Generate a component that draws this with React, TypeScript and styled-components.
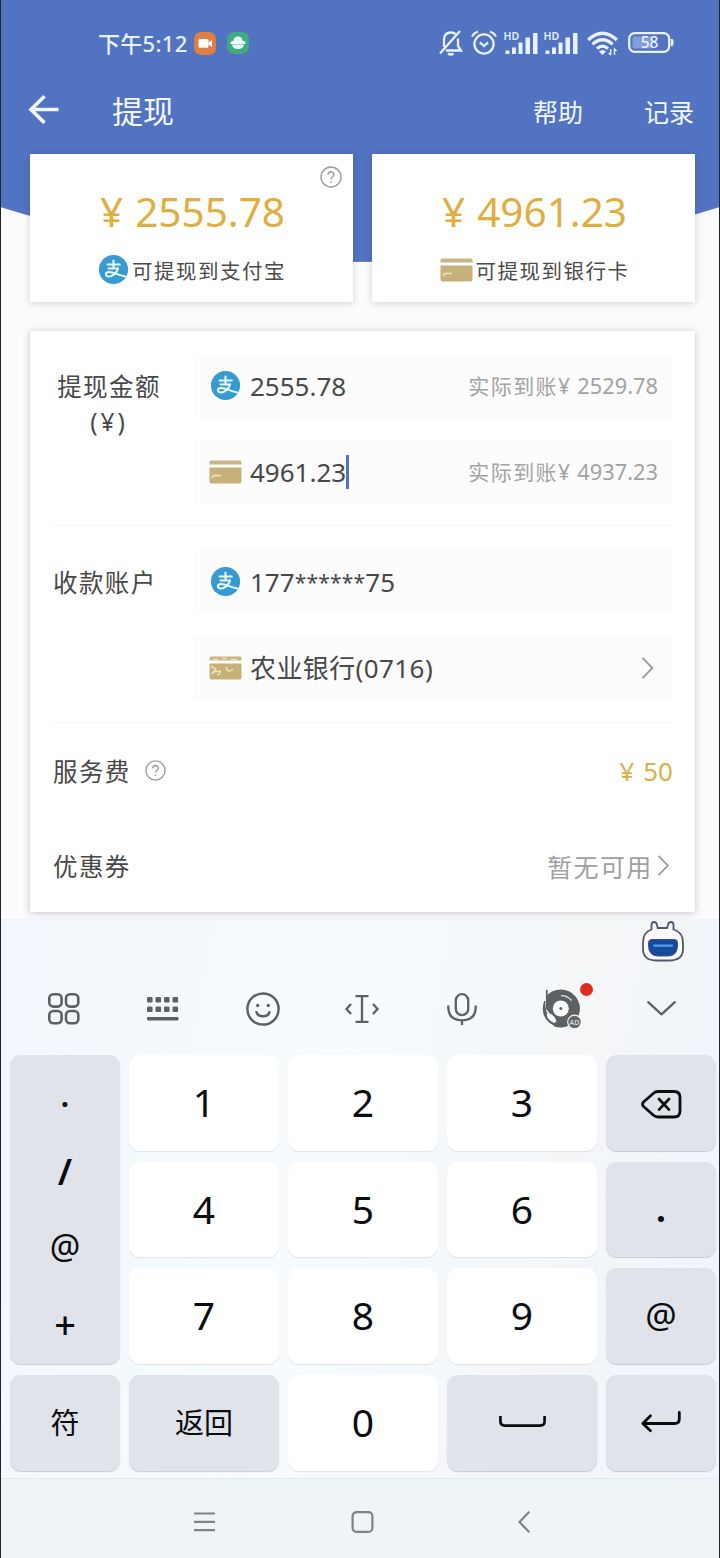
import React from 'react';
import styled, { createGlobalStyle } from 'styled-components';

const latin = '"Noto Sans", "Noto Sans CJK SC", sans-serif';

const GlobalStyle = createGlobalStyle`
  *, *::before, *::after { box-sizing: border-box; }
  body { margin: 0; font-family: ${latin}; }
  svg { display: block; flex: none; overflow: visible; }
`;

const Screen = styled.main`
  width: 720px;
  height: 1558px;
  overflow: hidden;
  display: flex;
  flex-direction: column;
  border: solid #22242e;
  border-width: 0 1px;
  background: radial-gradient(circle 1206px at 359px -944px, #5173c2 1205.4px, #fbfbfd 1206.4px);
`;

/* ---------- header ---------- */

const StatusBar = styled.header`
  height: 86px;
  padding: 0 45px 0 97px;
  display: flex;
  align-items: center;
  justify-content: space-between;
  color: #e8f1ff;
`;

const StatusGroup = styled.div<{ $gap: number }>`
  display: flex;
  align-items: center;
  gap: ${(p) => p.$gap}px;
`;

const Clock = styled.span`
  font-size: 22px;
  font-weight: 500;
  line-height: 30px;
  letter-spacing: 0.3px;
  margin-right: -5px;
`;

const AppBar = styled.nav`
  height: 50px;
  margin-bottom: 18px;
  padding: 0 25px 0 28px;
  display: flex;
  align-items: center;
  color: #f3f8ff;
`;

const Title = styled.h1`
  margin: 0 auto 0 52px;
  font-size: 31px;
  font-weight: 400;
  line-height: 40px;
`;

const NavAction = styled.span`
  margin-left: 61px;
  font-size: 25px;
  line-height: 36px;
  padding-top: 1px;
`;

/* ---------- balance cards ---------- */

const Balances = styled.section`
  padding: 0 24px 0 29px;
  margin-bottom: 29px;
  display: grid;
  grid-template-columns: 1fr 1fr;
  gap: 19px;
`;

const BalanceCard = styled.article`
  position: relative;
  height: 148px;
  padding-top: 30px;
  display: flex;
  flex-direction: column;
  align-items: center;
  background: #fff;
  box-shadow: 0 1px 7px rgba(40, 40, 50, 0.2);
`;

const Balance = styled.div`
  padding-left: 2px;
  display: flex;
  gap: 12px;
  color: #dfae40;
  font-size: 40.5px;
  line-height: 56px;
`;

const BalanceTarget = styled.div`
  margin-top: 15px;
  padding-left: 2px;
  display: flex;
  align-items: center;
  gap: 3px;
  height: 30px;
  color: #4b4b4b;
  font-size: 20.5px;
  letter-spacing: 1.5px;
`;

const CornerHelp = styled.span`
  position: absolute;
  top: 12px;
  right: 11px;
`;

/* ---------- form ---------- */

const Form = styled.section`
  height: 581px;
  margin: 0 24px 7px 29px;
  padding: 0 22px 0 23px;
  background: #fff;
  box-shadow: 0 1px 7px rgba(40, 40, 50, 0.26);
`;

const FieldGroup = styled.div<{ $height: number; $top: number }>`
  height: ${(p) => p.$height}px;
  padding-top: ${(p) => p.$top}px;
  display: grid;
  grid-template-columns: 140px 1fr;
  border-bottom: 1px solid #f8f8f8;
`;

const FieldLabel = styled.div<{ $center?: boolean }>`
  width: 112px;
  padding-top: 15px;
  color: #484848;
  font-size: 24.5px;
  line-height: 35px;
  letter-spacing: 1.4px;
  text-align: ${(p) => (p.$center ? 'center' : 'left')};
`;

const Unit = styled.span`
  letter-spacing: 3px;
`;

const Fields = styled.div`
  display: flex;
  flex-direction: column;
  gap: 22px;
`;

const Field = styled.div`
  height: 64px;
  padding: 0 15px 0 16px;
  display: flex;
  align-items: center;
  background: #fcfcfc;
`;

const IconSlot = styled.span`
  width: 33px;
  margin-right: 8px;
  display: flex;
  justify-content: center;
`;

const Value = styled.span<{ $spacing?: number }>`
  color: #484848;
  font-size: 26px;
  line-height: 36px;
  letter-spacing: ${(p) => p.$spacing ?? 0}px;
  white-space: nowrap;
`;

const Mask = styled.span`
  font-size: 21px;
  letter-spacing: 0.2px;
  line-height: 1;
  vertical-align: 2px;
`;

const Caret = styled.i`
  width: 3px;
  height: 34px;
  background: #5575c0;
`;

const Received = styled.span`
  margin-left: auto;
  display: flex;
  gap: 6px;
  color: #a3a3a3;
  font-size: 21.8px;
  line-height: 30px;
  white-space: nowrap;
`;

const ReceivedLabel = styled.span`
  font-size: 21px;
  letter-spacing: 1.4px;
`;

const End = styled.span<{ $pad: number }>`
  margin-left: auto;
  padding-right: ${(p) => p.$pad}px;
`;

const SummaryRow = styled.div`
  height: 95px;
  display: flex;
  align-items: center;
  gap: 14px;
  color: #484848;
  font-size: 24.5px;
  letter-spacing: 1.4px;
`;

const Fee = styled.span`
  margin-left: auto;
  display: flex;
  gap: 9px;
  color: #dcb046;
  font-size: 26px;
  letter-spacing: 0;
`;

const Coupon = styled.span`
  margin-left: auto;
  padding-right: 5px;
  display: flex;
  align-items: center;
  gap: 5px;
  color: #a0a0a0;
  font-size: 25px;
  letter-spacing: 1.3px;
`;

/* ---------- keyboard ---------- */

const Keyboard = styled.section`
  height: 559px;
  flex: none;
  display: flex;
  flex-direction: column;
  background: linear-gradient(100deg, #f1f7fc 0%, #f7fbfd 45%, #f4f6f8 75%, #f0f5fb 100%);
  border-top: 1px solid #f0f2f4;
`;

const Assistant = styled.div`
  height: 42px;
  padding: 1px 35px 0 0;
  display: flex;
  justify-content: flex-end;
`;

const Tools = styled.div`
  height: 93px;
  padding: 0 8px 0 13px;
  display: grid;
  grid-template-columns: repeat(7, 1fr);
  place-items: center;
  color: #5d6164;
`;

const Tool = styled.span`
  position: relative;
`;

const Dot = styled.i`
  position: absolute;
  top: -6px;
  right: -12px;
  width: 13px;
  height: 13px;
  border-radius: 50%;
  background: #e02b20;
`;

const Keys = styled.div`
  padding: 0 3px 0 9px;
  display: grid;
  grid-template-columns: 110px repeat(3, 150px) 110px;
  grid-template-rows: repeat(4, 95.7px);
  gap: 11px 9px;
`;

const Key = styled.div<{ $tone?: 'soft'; $drop?: number }>`
  display: flex;
  align-items: center;
  justify-content: center;
  border-radius: 11px;
  color: #0b0c0e;
  background: ${(p) => (p.$tone ? '#e0e4ea' : '#fff')};
  box-shadow: 0 1px 1px rgba(80, 90, 105, ${(p) => (p.$tone ? 0.28 : 0.14)});
  font-size: ${(p) => (p.$tone ? 29 : 39)}px;
  padding-top: ${(p) => p.$drop ?? 0}px;
  padding-bottom: ${(p) => (p.$drop ? 0 : 3)}px;
`;

const SymbolColumn = styled(Key)`
  grid-row: span 3;
  flex-direction: column;
  justify-content: flex-start;
`;

const SymbolCell = styled.span<{ $size: number; $lift?: number; $weight?: number }>`
  height: 76px;
  padding-bottom: ${(p) => p.$lift ?? 0}px;
  display: flex;
  align-items: center;
  font-size: ${(p) => p.$size}px;
  font-weight: ${(p) => p.$weight ?? 400};
  line-height: 1;
`;

const Sign = styled.span<{ $weight: number }>`
  font-size: 35px;
  font-weight: ${(p) => p.$weight};
  line-height: 40px;
  padding-bottom: 5px;
`;

const SystemNav = styled.footer`
  height: 80px;
  padding: 7px 182px 0 193px;
  flex: none;
  display: flex;
  align-items: center;
  justify-content: space-between;
  background: #eff4f7;
  border-top: 1px solid #e5e9eb;
`;

/* ---------- drawings ---------- */

const Alipay = () => (
  <svg width="30" height="30" viewBox="0.5 0.5 30 30" fill="none">
    <circle cx="15" cy="15" r="14.6" fill="#379bd2" />
    <g stroke="#e9fbff" strokeWidth="2" strokeLinecap="round">
      <path d="M9 10H21.3M15 6V14M10 14H19.6" />
      <path d="M19.6 14C18.3 18 14.5 22 10.3 22C6.2 22 6.6 17.6 10.6 17.6C15 17.6 20 20.6 26.8 22" />
    </g>
  </svg>
);

const BankCard = ({ worn }: { worn?: boolean }) => (
  <svg width="33" height="24" viewBox="0 0 33 24" fill="none">
    <path d="M2 0.5H31Q32.5 0.5 32.5 2V4.6H0.5V2Q0.5 0.5 2 0.5Z" fill="#c9b584" />
    <path d="M0.5 7.4H32.5V21.5Q32.5 23.5 30.5 23.5H2.5Q0.5 23.5 0.5 21.5Z" fill="#c7b07a" />
    <path d="M3 18L5 15.6H12" stroke="#efe5c4" strokeWidth="1.5" />
    {worn && (
      <path
        d="M4 3.5H9M13 2.5H18M22 3.5H28M2 10.5L7 13L4 17M8 19Q12 19 11 14M17 11Q19 18 24 13"
        stroke="#efe3b4"
        strokeWidth="1.4"
      />
    )}
  </svg>
);

const Help = ({ size }: { size: number }) => (
  <svg width={size} height={size} viewBox="0 0 22 22" fill="none" stroke="#9b9b9b" strokeWidth="1.4">
    <circle cx="11" cy="11" r="10" />
    <path d="M8 8.7C8 4.8 14 4.9 14 8.5C14 10.7 11 10.7 11 13.4" />
    <path d="M11 15.2V16.8" />
  </svg>
);

const Chevron = ({ h }: { h: number }) => (
  <svg width={h / 2} height={h} viewBox="0 0 11 22" fill="none" stroke="#9c9c9c" strokeWidth="1.9">
    <path d="M0.6 0.8L10.3 11L0.6 21.2" />
  </svg>
);

const BackArrow = () => (
  <svg width="31" height="30" viewBox="1 0.5 31 30" fill="none" stroke="#f3f8ff" strokeWidth="3.6">
    <path d="M30.5 14H3M16.5 0.8L3 14L16.5 27.4" />
  </svg>
);

const RecorderBadge = () => (
  <svg width="22" height="23" viewBox="0 0 22 23">
    <rect width="22" height="23" rx="7" fill="#df7f42" />
    <rect x="4.5" y="7" width="10" height="8.8" rx="1.6" fill="#fff" />
    <path d="M14.5 10.5L18 8V15L14.5 12.5Z" fill="#fff" />
  </svg>
);

const CloudBadge = () => (
  <svg width="22" height="22" viewBox="0 0 22 22">
    <rect width="22" height="22" rx="7" fill="#41a983" />
    <path d="M6.5 8.7Q7 4.5 11 4.5Q15 4.5 15.5 8.7Q19 9 18.5 12H3.5Q3 9 6.500 8.7Z" fill="#eafff8" />
    <path d="M5 12.400H17Q16 17 11 17Q6 17 5 12.400Z" fill="#eafff8" />
  </svg>
);

const Muted = () => (
  <svg width="24" height="26" viewBox="0 0 24 26" fill="none" stroke="currentColor" strokeWidth="2.3">
    <path d="M5 17V10Q5 2.5 12 2.5Q14.5 2.5 16.5 4M19 8.5V16L22 20.5H7M9 23.5Q12 25.5 14.5 23.5M1 23.5L21 1" />
  </svg>
);

const Alarm = () => (
  <svg width="26" height="26" viewBox="0 0 26 26" fill="none" stroke="currentColor" strokeWidth="2.3">
    <circle cx="13" cy="14" r="9.6" />
    <path d="M1 6.5Q3 3 7 1.5M25 6.5Q23 3 19 1.5M8.8 12.3L13 16L17 12.3" />
  </svg>
);

const Signal = () => (
  <svg width="32" height="24" viewBox="1 0 32 24" fill="currentColor">
    <text x="-0.5" y="8.5" fontSize="10.5" fontWeight="600" fontFamily="Noto Sans">HD</text>
    <path d="M1.5 19.5H5.5V23H1.5ZM8 16.5H12V23H8ZM14.5 11.5H18.5V23H14.5ZM21.5 6.5H26V23H21.5ZM29 2H33.5V23H29Z" />
  </svg>
);

const Wifi = () => (
  <svg width="35" height="24" viewBox="-2 0 35 24" fill="none" stroke="currentColor" strokeWidth="3.2">
    <path d="M1.2 9Q15.5 -4.600 29.800 9M5.500 13.400Q15.500 4.200 25.500 13.400M10 17.700Q15.500 12.600 21 17.700" />
    <path d="M12 20.5Q15.5 17.5 19 20.5L15.5 24Z" fill="currentColor" stroke="none" />
    <path d="M23.7 18V24M21.7 22L23.7 24M27.5 24V18L29.5 20" strokeWidth="1.3" />
  </svg>
);

const Battery = () => (
  <svg width="46" height="22" viewBox="0 0 46 22" fill="none">
    <rect x="1.2" y="1.2" width="40" height="18.6" rx="5.500" stroke="currentColor" strokeWidth="2.3" />
    <rect x="4.5" y="4.5" width="20" height="12" rx="2" fill="#b4c8f0" opacity="0.5" />
    <path d="M43 7H44.2Q45.5 7 45.5 10.500Q45.5 14 44.2 14H43Z" fill="currentColor" />
    <text x="21.5" y="16" fontSize="15.5" fontWeight="500" fontFamily="Noto Sans" textAnchor="middle" fill="currentColor">58</text>
  </svg>
);

const Mascot = () => (
  <svg width="42" height="41" viewBox="0 0 42 41" fill="none">
    <path
      d="M9.5 8.5V4Q9.5 1 12 1Q14.5 1 15 4L15.7 7H25L26 4Q26.5 1 29 1Q31.5 1 31.5 4V8.5Q41 11 41 22V28Q41 39.5 27 39.5H15Q1 39.5 1 28V22Q1 11 9.5 8.5Z"
      fill="#fbfaff"
      stroke="#52556b"
      strokeWidth="1.8"
    />
    <path d="M10 18.5H32Q35.5 18.5 35.5 21.5V24Q35.500 35 26 35H16Q6.5 35 6.5 24V21.5Q6.5 18.5 10 18.5Z" fill="#184a9b" stroke="#3b4d91" />
    <path d="M12 24.6H30" stroke="#4d9df0" strokeWidth="2.2" strokeLinecap="round" />
  </svg>
);

const GridIcon = () => (
  <svg width="32" height="32" viewBox="0 0 32 32" fill="none" stroke="currentColor" strokeWidth="2.6">
    <rect x="1.3" y="1.3" width="12.3" height="12.3" rx="4" />
    <rect x="18" y="1.3" width="12.3" height="12.3" rx="4" />
    <rect x="1.3" y="18" width="12.3" height="12.3" rx="4" />
    <rect x="18" y="18" width="12.3" height="12.3" rx="4" />
  </svg>
);

const KeyboardIcon = () => (
  <svg width="32" height="24" viewBox="0 0 32 24" fill="currentColor">
    {[0, 8.5, 17, 25.5].map((x) => (
      <React.Fragment key={x}>
        <rect x={x} y="0" width="5.6" height="5.6" rx="1.3" />
        <rect x={x} y="9.5" width="5.6" height="5.6" rx="1.3" />
      </React.Fragment>
    ))}
    <rect y="20" width="31.5" height="3.4" rx="1" />
  </svg>
);

const Smile = () => (
  <svg width="34" height="34" viewBox="0 0 34 34" fill="none" stroke="currentColor" strokeWidth="2.5" strokeLinecap="round">
    <circle cx="17" cy="17" r="15.6" />
    <path d="M10.5 20.2Q12 24.3 17 24.3Q22 24.3 23.5 20.2" />
    <circle cx="11.7" cy="13.5" r="1.7" fill="currentColor" stroke="none" />
    <circle cx="22.3" cy="13.5" r="1.7" fill="currentColor" stroke="none" />
  </svg>
);

const CursorIcon = () => (
  <svg width="34" height="28" viewBox="0 0 34 28" fill="none" stroke="currentColor" strokeWidth="2.3">
    <path d="M10.5 1.2H23.5M17 1.2V26.8M10.5 26.8H23.5M6 9L1.5 14L6 19M28 9L32.5 14L28 19" />
  </svg>
);

const Mic = () => (
  <svg width="30" height="32" viewBox="0 0 30 32" fill="none" stroke="currentColor" strokeWidth="2.3">
    <rect x="8.8" y="1.2" width="12.4" height="21" rx="6.2" />
    <path d="M1.3 12.5V14Q1.3 27.3 15 27.3Q28.7 27.3 28.7 14V12.5M15 27.3V32" />
  </svg>
);

const Record = () => (
  <svg width="39" height="40" viewBox="0.5 0 39 40" fill="none">
    <path d="M5 7Q10 0.5 19.3 0.5A19 19 0 1 1 12 37L13 32L5 20Z" fill="currentColor" />
    <path d="M5.3 1V20.5" stroke="currentColor" strokeWidth="1.8" />
    <path d="M2.6 12Q-1.500 25 7 33Q12 37.500 19 38L20 33L12 33Q2.500 24 4 12Z" fill="currentColor" />
    <ellipse cx="10" cy="29" rx="6" ry="2.8" transform="rotate(45 10 29)" fill="#f7fafd" />
    <circle cx="19.3" cy="19.5" r="8" fill="#fbfdfe" />
    <circle cx="19.3" cy="19.5" r="1.5" fill="currentColor" />
    <path d="M19.5 6.6Q26 6.5 30 11.5" stroke="#e4e7e9" strokeWidth="1.4" />
    <circle cx="33" cy="33" r="6.8" fill="#62666a" stroke="#f7fafd" strokeWidth="1.2" />
    <text x="33" y="35.6" fontSize="7" fontWeight="600" fontFamily="Noto Sans" textAnchor="middle" fill="#d6dadd">AD</text>
  </svg>
);

const Collapse = () => (
  <svg width="29" height="15" viewBox="0 0 29 15" fill="none" stroke="currentColor" strokeWidth="2.3" strokeLinecap="round" strokeLinejoin="round">
    <path d="M1.2 1.2L14.5 13.3L27.8 1.2" />
  </svg>
);

const Backspace = () => (
  <svg width="41" height="29" viewBox="0 0 41 29" fill="none" stroke="currentColor" strokeWidth="2.8" strokeLinejoin="round" strokeLinecap="round">
    <path d="M17 1.5H33Q39 1.5 39 7.5V21Q39 27 33 27H17Q14.5 27 12.5 25.3L2.5 16.5Q0.5 14.3 2.5 12L12.5 3.2Q14.5 1.5 17 1.5Z" />
    <path d="M18 9L28 19.6M28 9L18 19.6" />
  </svg>
);

const Space = () => (
  <svg width="47" height="11" viewBox="0 0 47 11" fill="none" stroke="currentColor" strokeWidth="2.7">
    <path d="M1.4 0V5Q1.4 9.6 6 9.6H41Q45.6 9.6 45.6 5V0" />
  </svg>
);

const Enter = () => (
  <svg width="40" height="21" viewBox="0 0 40 21" fill="none" stroke="currentColor" strokeWidth="2.8" strokeLinecap="round" strokeLinejoin="round">
    <path d="M38.3 1.4V8Q38.3 12.5 33.5 12.5H2M9.5 4.8L1.8 12.5L9.5 19.8" />
  </svg>
);

const MenuIcon = () => (
  <svg width="21" height="20" viewBox="0 0 21 20" stroke="#7f8386" strokeWidth="2.2">
    <path d="M0 1.5H21M0 9.8H21M0 18.2H21" />
  </svg>
);

const HomeIcon = () => (
  <svg width="22" height="22" viewBox="0.5 0 22 22" fill="none" stroke="#7f8386" strokeWidth="2.2">
    <rect x="1.1" y="1.1" width="19.8" height="19.8" rx="4" />
  </svg>
);

const BackIcon = () => (
  <svg width="26" height="22" viewBox="-7 0 26 22" fill="none" stroke="#7f8386" strokeWidth="2.2">
    <path d="M11.3 0.8L1.5 11L11.3 21.2" />
  </svg>
);

/* ---------- screen ---------- */

export default function App() {
  return (
    <Screen>
      <GlobalStyle />
      <StatusBar>
        <StatusGroup $gap={11}>
          <Clock>下午5:12</Clock>
          <RecorderBadge />
          <CloudBadge />
        </StatusGroup>
        <StatusGroup $gap={8}>
          <Muted />
          <Alarm />
          <Signal />
          <Signal />
          <Wifi />
          <Battery />
        </StatusGroup>
      </StatusBar>

      <AppBar>
        <BackArrow />
        <Title>提现</Title>
        <NavAction>帮助</NavAction>
        <NavAction>记录</NavAction>
      </AppBar>

      <Balances>
        <BalanceCard>
          <CornerHelp><Help size={22} /></CornerHelp>
          <Balance><span>¥</span><span>2555.78</span></Balance>
          <BalanceTarget><Alipay />可提现到支付宝</BalanceTarget>
        </BalanceCard>
        <BalanceCard>
          <Balance><span>¥</span><span>4961.23</span></Balance>
          <BalanceTarget><BankCard />可提现到银行卡</BalanceTarget>
        </BalanceCard>
      </Balances>

      <Form>
        <FieldGroup $height={195} $top={23}>
          <FieldLabel $center>提现金额<br /><Unit>(¥)</Unit></FieldLabel>
          <Fields>
            <Field>
              <IconSlot><Alipay /></IconSlot>
              <Value>2555.78</Value>
              <Received><ReceivedLabel>实际到账¥</ReceivedLabel>2529.78</Received>
            </Field>
            <Field>
              <IconSlot><BankCard /></IconSlot>
              <Value>4961.23</Value>
              <Caret />
              <Received><ReceivedLabel>实际到账¥</ReceivedLabel>4937.23</Received>
            </Field>
          </Fields>
        </FieldGroup>
        <FieldGroup $height={197} $top={24}>
          <FieldLabel>收款账户</FieldLabel>
          <Fields>
            <Field>
              <IconSlot><Alipay /></IconSlot>
              <Value>177<Mask>******</Mask>75</Value>
            </Field>
            <Field>
              <IconSlot><BankCard worn /></IconSlot>
              <Value $spacing={0.4}>农业银行(0716)</Value>
              <End $pad={5}><Chevron h={22} /></End>
            </Field>
          </Fields>
        </FieldGroup>
        <SummaryRow>
          服务费
          <Help size={21} />
          <Fee><span>¥</span>50</Fee>
        </SummaryRow>
        <SummaryRow>
          优惠券
          <Coupon>暂无可用<Chevron h={21} /></Coupon>
        </SummaryRow>
      </Form>

      <Keyboard>
        <Assistant><Mascot /></Assistant>
        <Tools>
          <GridIcon />
          <KeyboardIcon />
          <Smile />
          <CursorIcon />
          <Mic />
          <Tool><Record /><Dot /></Tool>
          <Collapse />
        </Tools>
        <Keys>
          <SymbolColumn $tone="soft" $drop={12}>
            <SymbolCell $size={32} $weight={600}>·</SymbolCell>
            <SymbolCell $size={36} $lift={13} $weight={600}>/</SymbolCell>
            <SymbolCell $size={34} $lift={13}>@</SymbolCell>
            <SymbolCell $size={38} $lift={6} $weight={500}>+</SymbolCell>
          </SymbolColumn>
          <Key>1</Key>
          <Key>2</Key>
          <Key>3</Key>
          <Key $tone="soft" $drop={4}><Backspace /></Key>
          <Key>4</Key>
          <Key>5</Key>
          <Key>6</Key>
          <Key $tone="soft" $drop={3}><Sign $weight={700}>.</Sign></Key>
          <Key>7</Key>
          <Key>8</Key>
          <Key>9</Key>
          <Key $tone="soft" $drop={3}><Sign $weight={400}>@</Sign></Key>
          <Key $tone="soft">符</Key>
          <Key $tone="soft">返回</Key>
          <Key>0</Key>
          <Key $tone="soft"><Space /></Key>
          <Key $tone="soft"><Enter /></Key>
        </Keys>
      </Keyboard>
      <SystemNav>
        <MenuIcon />
        <HomeIcon />
        <BackIcon />
      </SystemNav>
    </Screen>
  );
}
